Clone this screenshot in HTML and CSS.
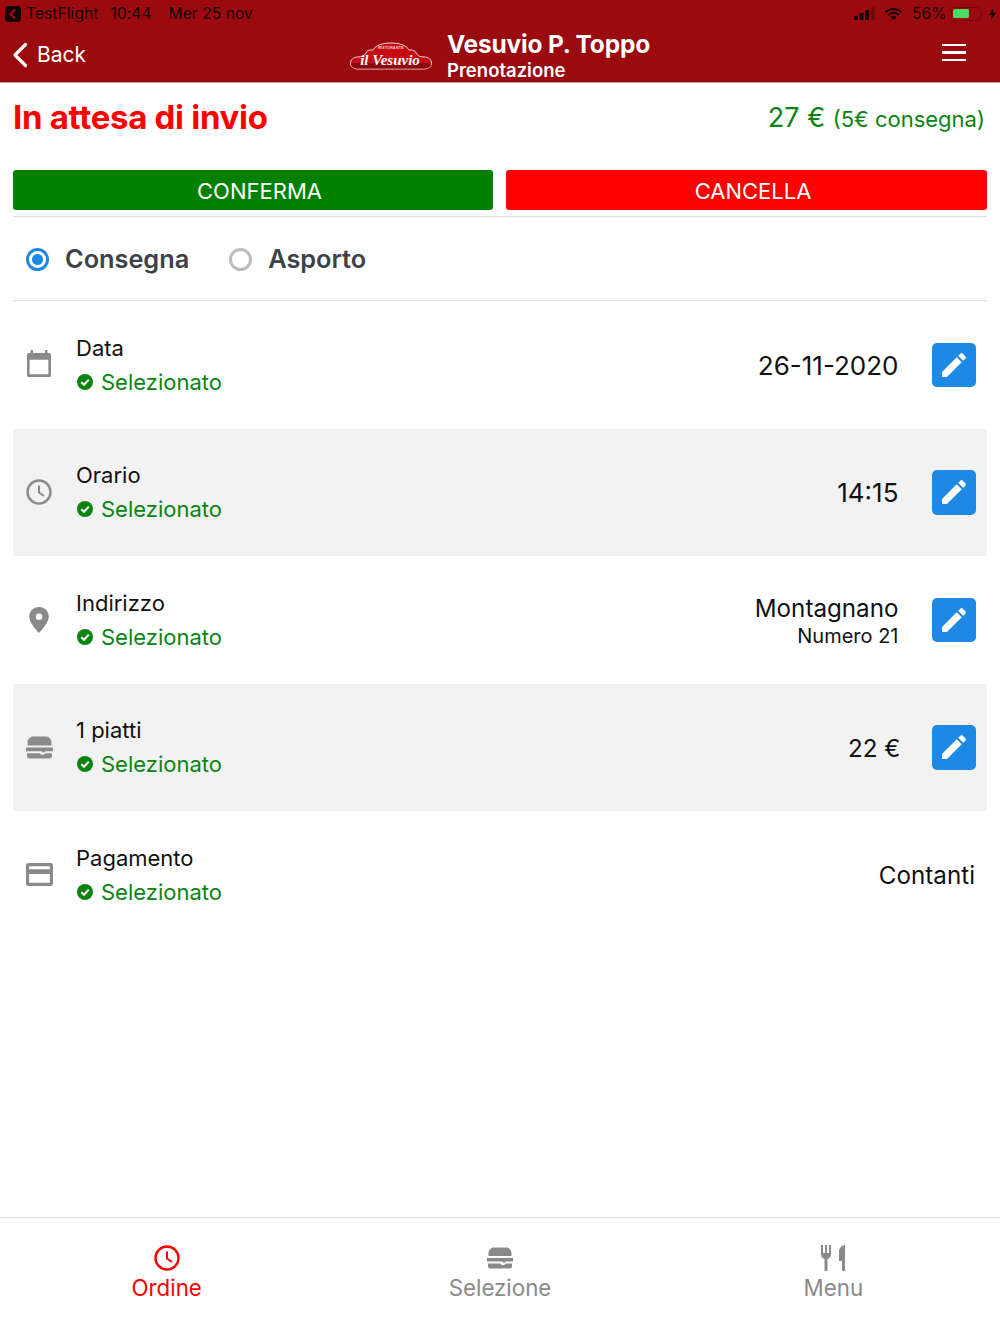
FILE: index.html
```html
<!DOCTYPE html>
<html lang="it">
<head>
<meta charset="utf-8">
<title>Vesuvio P. Toppo</title>
<link rel="stylesheet" href="styles.css">
</head>
<body>
<div class="app">
  <header class="header">
    <div class="status">
      <div class="status-left">
        <svg class="tf" viewBox="0 0 16 16"><rect width="16" height="16" rx="3.5" fill="#170304"/><path d="M10 3.5 5.5 8l4.500 4.500" fill="none" stroke="#9b0a0f" stroke-width="2.400"/></svg>
        <span>TestFlight</span><span class="s-time">10:44</span><span class="s-date">Mer 25 nov</span>
      </div>
      <div class="status-right">
        <svg class="sig" viewBox="0 0 21 13"><rect x="0" y="9" width="4" height="4" fill="#170304"/><rect x="5.500" y="6" width="4" height="7" fill="#170304"/><rect x="11" y="3" width="4" height="10" fill="#170304"/><rect x="16.500" y="0" width="4" height="13" fill="#70090c"/></svg>
        <svg class="wifi" viewBox="0 0 20 14"><path d="M1.500 5.200a12 12 0 0 1 17 0M4.300 8a8 8 0 0 1 11.400 0" fill="none" stroke="#170304" stroke-width="2.200"/><path d="M7 10.300a4.300 4.300 0 0 1 6 0L10 13.500z" fill="#170304"/></svg>
        <span class="pct">56%</span>
        <span class="batt"><span class="batt-fill"></span></span>
        <span class="nub"></span>
        <svg class="bolt" viewBox="0 0 8 13"><path d="M5 0 0 7.500h3L2.500 13 8 5.200H4.600z" fill="#170304"/></svg>
      </div>
    </div>
    <div class="nav">
      <div class="back">
        <svg class="chev" viewBox="0 0 16 26"><path d="M13.500 2.500 3 13l10.500 10.500" fill="none" stroke="#fff" stroke-width="3.200" stroke-linecap="round" stroke-linejoin="round"/></svg>
        <span>Back</span>
      </div>
      <div class="brand">
        <svg class="logo" viewBox="0 0 84 28">
          <path d="M9 15 C13 15 15 14 17 11 C18 8 21 8 24 8 C27 3 34 1 42 1 C50 1 57 3 60 8 C63 8 66 8 67 11 C69 14 71 15 75 15 C85 15 85 27 75 27 H9 C-1 27 -1 15 9 15 Z" fill="#c40c12" stroke="#efd5d5" stroke-width="1"/>
          <path d="M2 21 H82 C82.500 24.500 79 26.500 75 26.500 H9 C5 26.500 1.500 24.500 2 21 Z" fill="#8a0a0d"/>
          <text x="42" y="6.500" text-anchor="middle" class="logo-small">RISTORANTE</text>
          <text x="41" y="23" text-anchor="middle" class="logo-text">il Vesuvio</text>
        </svg>
        <div class="brand-text">
          <div class="brand-name">Vesuvio P. Toppo</div>
          <div class="brand-sub">Prenotazione</div>
        </div>
      </div>
      <div class="burger"><i></i><i></i><i></i></div>
    </div>
  </header>

  <main class="main">
    <div class="title-row">
      <h1 class="title">In attesa di invio</h1>
      <div class="price"><span class="price-big">27 €</span> <span class="price-small">(5€ consegna)</span></div>
    </div>
    <div class="actions">
      <button class="btn btn-green">CONFERMA</button>
      <button class="btn btn-red">CANCELLA</button>
    </div>
    <div class="radios">
      <label class="radio"><span class="dot dot-on"></span>Consegna</label>
      <label class="radio"><span class="dot"></span>Asporto</label>
    </div>
    <div class="rows">
      <div class="row">
        <svg class="ri ri-cal" viewBox="2 1.500 20 22" preserveAspectRatio="none"><path d="M5 1.500h2v2.500h10V1.500h2V4h1.500A1.500 1.500 0 0 1 22 5.500V22a1.500 1.500 0 0 1-1.500 1.500h-17A1.500 1.500 0 0 1 2 22V5.500A1.500 1.500 0 0 1 3.500 4H5zM4.200 9.500v11.800h15.600V9.500z" fill="#8a8a8a"/></svg>
        <div class="info"><div class="name">Data</div><div class="ok"><svg class="check" viewBox="0 0 16 16"><circle cx="8" cy="8" r="8" fill="#0a840f"/><path d="M4.300 8.300 7 10.800 11.800 5.600" fill="none" stroke="#fff" stroke-width="2"/></svg>Selezionato</div></div>
        <div class="val val-num">26-11-2020</div>
        <button class="edit"><svg viewBox="0 0 24 24"><path d="M3 17.250V21h3.750L17.810 9.940l-3.750-3.750zM20.710 7.040a1 1 0 0 0 0-1.410l-2.340-2.340a1 1 0 0 0-1.410 0l-1.830 1.830 3.750 3.750z" fill="#fff"/></svg></button>
      </div>
      <div class="row alt">
        <svg class="ri" viewBox="0 0 26 26"><circle cx="13" cy="13" r="11.500" fill="none" stroke="#8a8a8a" stroke-width="2.400"/><path d="M13 6.500V13.500L18 17" fill="none" stroke="#8a8a8a" stroke-width="2"/></svg>
        <div class="info"><div class="name">Orario</div><div class="ok"><svg class="check" viewBox="0 0 16 16"><circle cx="8" cy="8" r="8" fill="#0a840f"/><path d="M4.300 8.300 7 10.800 11.800 5.600" fill="none" stroke="#fff" stroke-width="2"/></svg>Selezionato</div></div>
        <div class="val val-num">14:15</div>
        <button class="edit"><svg viewBox="0 0 24 24"><path d="M3 17.250V21h3.750L17.810 9.940l-3.750-3.750zM20.710 7.040a1 1 0 0 0 0-1.410l-2.340-2.340a1 1 0 0 0-1.410 0l-1.830 1.830 3.750 3.750z" fill="#fff"/></svg></button>
      </div>
      <div class="row">
        <svg class="ri" viewBox="0 0 24 24"><path fill-rule="evenodd" d="M12 0C6.500 0 3 4 3 9c0 6 9 15 9 15s9-9 9-15c0-5-3.500-9-9-9zm0 6a3 3 0 1 1 0 6 3 3 0 0 1 0-6z" fill="#8a8a8a"/></svg>
        <div class="info"><div class="name">Indirizzo</div><div class="ok"><svg class="check" viewBox="0 0 16 16"><circle cx="8" cy="8" r="8" fill="#0a840f"/><path d="M4.300 8.300 7 10.800 11.800 5.600" fill="none" stroke="#fff" stroke-width="2"/></svg>Selezionato</div></div>
        <div class="val val-stack"><div>Montagnano</div><div class="val-sub">Numero 21</div></div>
        <button class="edit"><svg viewBox="0 0 24 24"><path d="M3 17.250V21h3.750L17.810 9.940l-3.750-3.750zM20.710 7.040a1 1 0 0 0 0-1.410l-2.340-2.340a1 1 0 0 0-1.410 0l-1.830 1.830 3.750 3.750z" fill="#fff"/></svg></button>
      </div>
      <div class="row alt">
        <svg class="ri ri-wide" viewBox="0 0 26 22"><path d="M1.500 9V6C1.500 3 4 .5 7 .5h12c3 0 5.500 2.500 5.500 5.500V9zM0 11h26v3.500h-7l-2 1.500-2-1.500H0zM1 16.500h12l2 1.500h2l2-1.500h6V19a2.500 2.500 0 0 1-2.500 2.500H3.500A2.500 2.500 0 0 1 1 19z" fill="#8a8a8a"/></svg>
        <div class="info"><div class="name">1 piatti</div><div class="ok"><svg class="check" viewBox="0 0 16 16"><circle cx="8" cy="8" r="8" fill="#0a840f"/><path d="M4.300 8.300 7 10.800 11.800 5.600" fill="none" stroke="#fff" stroke-width="2"/></svg>Selezionato</div></div>
        <div class="val val-piatti">22 €</div>
        <button class="edit"><svg viewBox="0 0 24 24"><path d="M3 17.250V21h3.750L17.810 9.940l-3.750-3.750zM20.710 7.040a1 1 0 0 0 0-1.410l-2.340-2.340a1 1 0 0 0-1.410 0l-1.830 1.830 3.750 3.750z" fill="#fff"/></svg></button>
      </div>
      <div class="row">
        <svg class="ri ri-wide" viewBox="0 0 26 22"><path fill-rule="evenodd" d="M2.500 0h21A2.500 2.500 0 0 1 26 2.500v17a2.500 2.500 0 0 1-2.500 2.500h-21A2.500 2.500 0 0 1 0 19.500v-17A2.500 2.500 0 0 1 2.500 0zM3 6h20V3H3zM3 10.500V19h20v-8.500z" fill="#8a8a8a"/></svg>
        <div class="info"><div class="name">Pagamento</div><div class="ok"><svg class="check" viewBox="0 0 16 16"><circle cx="8" cy="8" r="8" fill="#0a840f"/><path d="M4.300 8.300 7 10.800 11.800 5.600" fill="none" stroke="#fff" stroke-width="2"/></svg>Selezionato</div></div>
        <div class="val val-last">Contanti</div>
      </div>
    </div>
  </main>

  <nav class="tabs">
    <div class="tab tab-on">
      <svg class="ti" viewBox="0 0 26 26"><circle cx="13" cy="13" r="11.500" fill="none" stroke="#fe0000" stroke-width="2.400"/><path d="M13 6.500V13.500L18 17" fill="none" stroke="#fe0000" stroke-width="2"/></svg>
      <span>Ordine</span>
    </div>
    <div class="tab">
      <svg class="ti" viewBox="0 0 26 22"><path d="M1.500 9V6C1.500 3 4 .5 7 .5h12c3 0 5.500 2.500 5.500 5.500V9zM0 11h26v3.500h-7l-2 1.500-2-1.500H0zM1 16.500h12l2 1.500h2l2-1.500h6V19a2.500 2.500 0 0 1-2.500 2.500H3.500A2.500 2.500 0 0 1 1 19z" fill="#8a8a8a"/></svg>
      <span>Selezione</span>
    </div>
    <div class="tab">
      <svg class="ti" viewBox="0 0 26 26"><path d="M1 0h2v8h2V0h2v8h2V0h2v9c0 3-2 4.500-3.500 5V26h-3V14C3 13.500 1 12 1 9zM25 0V26h-3V16h-3V7c0-4 3-7 6-7z" fill="#8a8a8a"/></svg>
      <span>Menu</span>
    </div>
  </nav>
</div>
</body>
</html>
```

FILE: styles.css
```css
* { box-sizing: border-box; }
html, body { margin: 0; padding: 0; }
body { font-family: Inter, "Liberation Sans", sans-serif; background: #fff; color: #111; }
.app { width: 1000px; height: 1334px; display: flex; flex-direction: column; overflow: hidden; }

.header { height: 83px; background: #9b0a0f; border-bottom: 1px solid #c9a3a5; flex: none; }
.status { height: 27px; padding: 0 4px 0 5px; display: flex; justify-content: space-between; align-items: center; color: #170304; font-size: 15.500px; letter-spacing: .1px; }
.status-left { display: flex; align-items: center; }
.tf { width: 16px; height: 16px; margin-right: 5px; }
.s-time { margin-left: 12px; }
.s-date { margin-left: 17px; }
.status-right { display: flex; align-items: center; }
.sig { width: 21px; height: 13px; margin-right: 9px; }
.wifi { width: 19px; height: 14px; margin-right: 9px; }
.pct { margin-right: 4px; }
.batt { width: 30px; height: 14px; border: 1.500px solid #70090c; border-radius: 4px; padding: 1.500px; display: block; flex: none; }
.batt-fill { display: block; width: 16px; height: 100%; background: #4cd964; border-radius: 1.500px; }
.nub { width: 1.500px; height: 4px; background: #70090c; margin: 0 6px 0 1px; flex: none; }
.bolt { width: 7px; height: 12px; }

.nav { height: 55px; display: flex; align-items: center; padding: 0 34px 0 12px; }
.back { display: flex; align-items: center; color: #fff; font-size: 21px; gap: 9px; flex: 0 0 337px; }
.chev { width: 16px; height: 26px; }
.brand { display: flex; align-items: center; gap: 14px; }
.logo { width: 84px; height: 28px; margin-top: 3px; }
.logo-text { font-family: "Liberation Serif", serif; font-style: italic; font-weight: 700; font-size: 15px; fill: #fff; }
.logo-small { font-family: "Liberation Sans", sans-serif; font-size: 3.500px; font-weight: 700; fill: #f3dcdc; letter-spacing: .3px; }
.brand-text { color: #fff; font-weight: 700; }
.brand-name { font-size: 24.500px; line-height: 29px; letter-spacing: -.2px; margin-top: 1px; }
.brand-sub { font-size: 18.500px; line-height: 22px; font-weight: 600; }
.burger { width: 24px; display: flex; flex-direction: column; gap: 5px; margin: -4px 0 0 auto; }
.burger i { display: block; height: 2.500px; background: #fff; }

.main { flex: 1; padding: 0 13px; display: flex; flex-direction: column; }
.title-row { height: 87px; display: flex; justify-content: space-between; align-items: flex-start; padding-top: 15px; flex: none; }
.title { margin: 0; font-size: 33px; line-height: 38px; font-weight: 700; color: #fe0000; letter-spacing: -.3px; }
.price { color: #0a840f; padding: 1px 2px 0 0; line-height: 38px; }
.price-big { font-size: 27px; }
.price-small { font-size: 22px; margin-left: 3px; }

.actions { display: flex; gap: 13px; border-bottom: 1px solid #ddd; flex: none; height: 47px; }
.btn { flex: 1; height: 40px; border: 0; border-radius: 3px; color: #fff; font: 400 22px Inter, "Liberation Sans", sans-serif; padding: 2px 0 0 13px; }
.btn-green { background: #008000; flex: 0 0 480px; }
.btn-red { background: #fe0000; }

.radios { height: 84px; display: flex; align-items: center; border-bottom: 1px solid #ddd; padding: 1px 0 0 13px; gap: 40px; flex: none; }
.radio { display: flex; align-items: center; font-size: 25.300px; font-weight: 600; color: #3c4248; gap: 16px; line-height: 30px; }
.dot { width: 23px; height: 23px; border-radius: 50%; border: 3px solid #bdbdbd; display: block; }
.dot-on { border-color: #1e88e5; background: radial-gradient(circle, #1e88e5 0 5px, #fff 6px); }

.rows { display: flex; flex-direction: column; }
.row { height: 127.500px; display: flex; align-items: center; padding: 0 11px 0 13px; }
.alt { background: #f2f2f2; }
.ri { width: 26px; height: 26px; flex: none; }
.ri-cal { width: 24px; height: 27px; margin: -3px 1px 0; }
.ri-wide { width: 27px; height: 23px; margin-right: -1px; }
.info { flex: 1; margin-left: 24px; }
.name { font-size: 22px; line-height: 28px; color: #111; }
.ok { display: flex; align-items: center; font-size: 22px; line-height: 28px; color: #0a840f; margin-top: 6px; padding-left: 1px; }
.check { width: 16px; height: 16px; margin-right: 8px; }
.val { font-size: 24.200px; color: #111; margin-right: 33px; text-align: right; padding-top: 2px; }
.val-num { font-size: 26px; padding-top: 1px; }
.val-stack { line-height: 29px; padding-top: 3px; }
.val-sub { font-size: 20px; line-height: 26px; }
.val-piatti { margin-right: 31px; }
.val-last { margin-right: 1px; }
.edit { width: 44.500px; height: 44.500px; border: 0; border-radius: 5px; background: #1e88e5; padding: 6px; display: block; flex: none; }
.edit svg { display: block; width: 32px; height: 32px; }

.tabs { height: 117px; border-top: 1px solid #ddd; display: flex; flex: none; }
.tab { flex: 1; display: flex; flex-direction: column; align-items: center; padding-top: 27px; color: #8a8a8a; font-size: 22.300px; }
.tab-on { color: #fe0000; }
.ti { width: 26px; height: 26px; margin-bottom: 3px; }
```
